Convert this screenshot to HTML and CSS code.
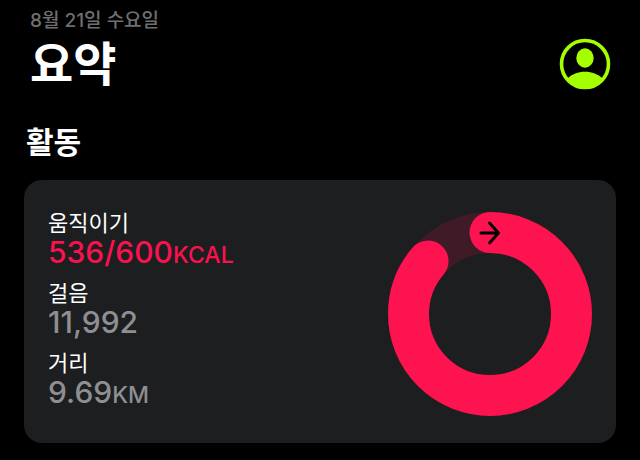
FILE: index.html
```html
<!DOCTYPE html>
<html lang="ko">
<head>
  <meta charset="UTF-8" />
  <meta name="viewport" content="width=device-width, initial-scale=1.0"/>
  <title>요약</title>
  <link rel="stylesheet" href="styles.css">
</head>
<body>

  <!-- Header -->
  <header class="header">
    <div>
      <p class="date">8월 21일 수요일</p>
      <h1 class="title">요약</h1>
    </div>
    <button type="button" class="profile" aria-label="프로필">
      <svg viewBox="0 0 52 52" width="52" height="52">
        <circle cx="26" cy="26" r="23.5" fill="none" stroke="currentColor" stroke-width="3.6" />
        <ellipse cx="26" cy="20" rx="8.7" ry="9.7" fill="currentColor" />
        <path d="M8.5 40.5 C13 36 19 33.7 26 33.7 S39 36 43.5 40.5 A23.5 23.5 0 0 1 8.5 40.5 Z" fill="currentColor" />
      </svg>
    </button>
  </header>

  <!-- Activity -->
  <main>
    <h2 class="section-title">활동</h2>
    <section class="card">
      <dl class="stats">
        <div class="stat">
          <dt>움직이기</dt>
          <dd class="move">536/600<span class="unit">KCAL</span></dd>
        </div>
        <div class="stat">
          <dt>걸음</dt>
          <dd>11,992</dd>
        </div>
        <div class="stat">
          <dt>거리</dt>
          <dd>9.69<span class="unit">KM</span></dd>
        </div>
      </dl>
      <svg class="ring" viewBox="0 0 206 206" width="206" height="206" role="img" aria-label="움직이기 링">
        <circle class="ring-track" cx="103" cy="103" r="81.5" />
        <circle class="ring-value" cx="103" cy="103" r="81.5" pathLength="360" stroke-dasharray="310.5 360" transform="rotate(-90 103 103)" />
        <path class="ring-arrow" d="M94 22 H111.5 M102.5 12 L111.5 22 L102.5 32" />
      </svg>
    </section>
  </main>

</body>
</html>
```

FILE: styles.css
```css
* {
  box-sizing: border-box;
}
body {
  margin: 0;
  padding: 8px 24px 16px;
  background: #000;
  color: #fff;
  font-family: Inter, "Noto Sans CJK KR", sans-serif;
}
h1, h2, p, dl, dd {
  margin: 0;
}
.header {
  display: flex;
  justify-content: space-between;
  align-items: flex-end;
  padding: 0 5px 0 6px;
}
.date {
  color: #6f6f71;
  font-family: Inter, "Noto Sans CJK KR", sans-serif;
  font-size: 19px;
  font-weight: 500;
  line-height: 26px;
}
.title {
  margin-top: 2px;
  font-size: 47px;
  font-weight: 700;
  line-height: 56px;
}
.profile {
  width: 52px;
  height: 52px;
  margin-bottom: 2px;
  padding: 0;
  border: none;
  background: none;
  color: #a6ff00;
  cursor: pointer;
}
.profile svg {
  display: block;
}
.section-title {
  margin: 30px 0 18px;
  padding-left: 2px;
  font-size: 30px;
  font-weight: 700;
  line-height: 40px;
}
.card {
  display: flex;
  justify-content: space-between;
  align-items: flex-start;
  padding: 30px 23px 26px 24px;
  border-radius: 18px;
  background: #1c1e1f;
}
.stats {
  display: flex;
  flex-direction: column;
  gap: 12px;
}
.stat dt {
  font-size: 22px;
  line-height: 26px;
}
.stat dd {
  color: #8e8e93;
  font-size: 30px;
  font-weight: 500;
  line-height: 32px;
}
.stat .move {
  color: #fa114f;
}
.unit {
  font-size: 23px;
  line-height: 1;
}
.ring {
  display: block;
  margin-top: 1px;
}
.ring-track,
.ring-value {
  fill: none;
  stroke-width: 41;
}
.ring-track {
  stroke: #3e1b26;
}
.ring-value {
  stroke: #fc1350;
  stroke-linecap: round;
}
.ring-arrow {
  fill: none;
  stroke: #000;
  stroke-width: 3;
  stroke-linecap: round;
  stroke-linejoin: round;
}
```
